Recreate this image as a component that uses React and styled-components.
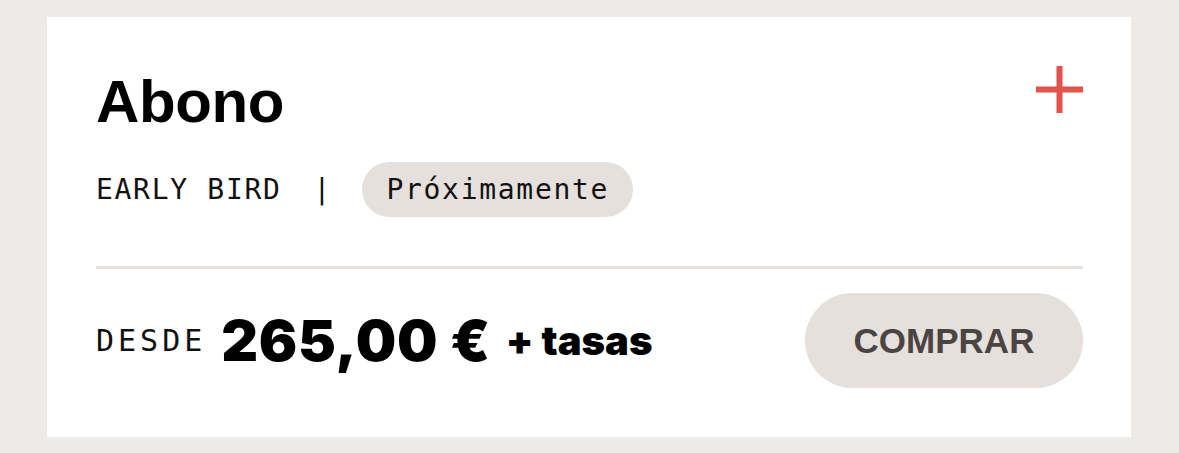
import React from "react";
import styled, { createGlobalStyle } from "styled-components";

const GlobalStyle = createGlobalStyle`
  html, body {
    margin: 0;
    padding: 0;
    background: #eeeae7;
  }
  body {
    font-family: "Liberation Sans", Arial, sans-serif;
    color: #000;
  }
`;

const Page = styled.div`
  padding: 17px 48px 16px 47px;
`;

const Card = styled.div`
  background: #ffffff;
  padding: 55px 48px 49px 49px;
  display: flex;
  flex-direction: column;
`;

const Header = styled.div`
  display: flex;
  justify-content: space-between;
  align-items: flex-start;
`;

const Title = styled.h2`
  margin: 0;
  font-family: "Liberation Sans", Arial, sans-serif;
  font-weight: 700;
  font-size: 60px;
  line-height: 60px;
  letter-spacing: -0.4px;
`;

const PlusButton = styled.button`
  border: 0;
  background: transparent;
  padding: 0;
  margin-top: -6px;
  width: 47px;
  height: 47px;
  cursor: pointer;
  display: flex;
`;

const Meta = styled.div`
  display: flex;
  align-items: center;
  gap: 32px;
  margin-top: 30px;
`;

const Mono = styled.span`
  font-family: "DejaVu Sans Mono", "Liberation Mono", monospace;
  font-size: ${({ size }) => size || 28}px;
  letter-spacing: ${({ spacing }) => spacing ?? 1.7}px;
  color: #111;
`;

const Pill = styled.span`
  display: inline-flex;
  align-items: center;
  height: 55px;
  padding: 0 24px;
  border-radius: 28px;
  background: #e5e0dc;
`;

const Divider = styled.hr`
  margin: 49px 0 24px;
  border: 0;
  height: 3px;
  background: #e6e1dd;
`;

const Footer = styled.div`
  display: flex;
  justify-content: space-between;
  align-items: center;
`;

const PriceGroup = styled.div`
  display: flex;
  align-items: center;
  gap: 15px;
`;

const Amount = styled.span`
  font-family: Inter, "Liberation Sans", sans-serif;
  font-weight: 900;
  font-size: ${({ size }) => size}px;
  letter-spacing: ${({ spacing }) => spacing || 0}px;
  color: #000;
`;

const BuyButton = styled.button`
  width: 278px;
  height: 95px;
  border: 0;
  border-radius: 48px;
  background: #e5e0dc;
  color: #4a4543;
  font-family: "Liberation Sans", Arial, sans-serif;
  font-weight: 700;
  font-size: 35px;
  cursor: pointer;
`;

const PlusIcon = () => (
  <svg width="47" height="47" viewBox="0 0 47 47">
    <path d="M23.5 0V47M0 23.5H47" stroke="#e4524c" strokeWidth="6" />
  </svg>
);

export default function App() {
  return (
    <>
      <GlobalStyle />
      <Page>
        <Card>
          <Header>
            <Title>Abono</Title>
            <PlusButton aria-label="Ver más">
              <PlusIcon />
            </PlusButton>
          </Header>
          <Meta>
            <Mono>EARLY BIRD</Mono>
            <Mono spacing={0}>|</Mono>
            <Pill>
              <Mono>Próximamente</Mono>
            </Pill>
          </Meta>
          <Divider />
          <Footer>
            <PriceGroup>
              <Mono size={30} spacing={4}>DESDE</Mono>
              <Amount size={57} spacing={0.7}>265,00 €</Amount>
              <Amount size={40}>+ tasas</Amount>
            </PriceGroup>
            <BuyButton>COMPRAR</BuyButton>
          </Footer>
        </Card>
      </Page>
    </>
  );
}
